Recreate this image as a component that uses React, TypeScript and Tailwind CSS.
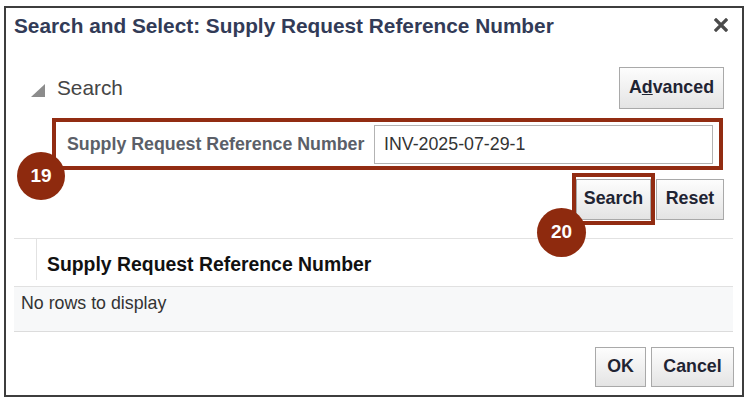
export default function App() {
  const btn =
    "flex items-center justify-center border border-[#a9a9a9] bg-linear-to-b from-[#fdfdfd] to-[#e4e4e4] text-[17.8px] font-bold text-[#1f2433] leading-none";
  return (
    <div className="relative w-[749px] h-[403px] bg-white pt-[6px] pl-[4px] font-['Liberation_Sans',Arial,sans-serif]">
      <div className="w-[740px] h-[391px] border-2 border-[#3d3d3d] flex flex-col">
        <div className="h-[59px] flex items-start pl-[8px] pr-[14px] pt-[6px]">
          <span className="text-[20.8px] leading-[24px] font-bold text-[#323b57]">
            Search and Select: Supply Request Reference Number
          </span>
          <svg className="ml-auto mt-[4px]" width="14" height="14" viewBox="0 0 14 14">
            <path d="M2 2L12 12M12 2L2 12" stroke="#4a4a4a" strokeWidth="3.2" strokeLinecap="square" />
          </svg>
        </div>

        <div className="h-[42px] flex items-center pl-[25px] pr-[18px]">
          <svg width="14" height="13" viewBox="0 0 14 13" className="mt-[4px]">
            <polygon points="14,0 14,13 0,13" fill="#8c8c8c" />
          </svg>
          <span className="ml-[12px] text-[20.8px] text-[#454545]">Search</span>
          <div className={btn + " ml-auto w-[105px] h-[42px]"}>
            A<span className="underline">d</span>vanced
          </div>
        </div>

        <div className="mt-[9px] ml-[46px] w-[671px] h-[52px] border-[4px] border-[#922c12] flex items-center pl-[11px] pr-[6px]">
          <span className="text-[17.8px] font-bold text-[#5b5f68] whitespace-nowrap">
            Supply Request Reference Number
          </span>
          <div className="ml-auto w-[339px] h-[39px] border border-[#b3b3b3] bg-white flex items-center pl-[9px] text-[17.8px] text-[#333]">
            INV-2025-07-29-1
          </div>
        </div>

        <div className="mt-[3px] h-[52px] flex items-center justify-end pr-[18px]">
          <div className="w-[83px] h-[52px] border-[4px] border-[#922c12] flex items-center justify-center">
            <div className={btn + " w-[75px] h-[41px]"}>Search</div>
          </div>
          <div className={btn + " ml-[1px] w-[68px] h-[41px]"}>Reset</div>
        </div>

        <div className="mt-[13px] ml-[8px] w-[719px] border-t border-[#e2e2e2]">
          <div className="h-[48px] flex border-b border-[#e1e1e1]">
            <div className="w-[23px] h-[41px] border-r border-[#e2e2e2]"></div>
            <div className="pl-[10px] pt-[14px] text-[19.4px] leading-[22px] font-bold text-[#111]">
              Supply Request Reference Number
            </div>
          </div>
          <div className="h-[45px] bg-[#f7f8f9] border-b border-[#dcdcdc] pl-[7px] pt-[6px] text-[17.8px] leading-[20px] text-[#333]">
            No rows to display
          </div>
        </div>

        <div className="mt-[15px] flex justify-end pr-[8px] gap-[5px]">
          <div className={btn + " w-[51px] h-[40px]"}>OK</div>
          <div className={btn + " w-[83px] h-[40px]"}>Cancel</div>
        </div>
      </div>

      <div className="absolute left-[17px] top-[152px] w-[48px] h-[48px] rounded-full bg-[#8e2a0e] flex items-center justify-center text-white font-bold text-[19px]">
        19
      </div>
      <div className="absolute left-[537px] top-[208px] w-[49px] h-[49px] rounded-full bg-[#8e2a0e] flex items-center justify-center text-white font-bold text-[19px]">
        20
      </div>
    </div>
  );
}
